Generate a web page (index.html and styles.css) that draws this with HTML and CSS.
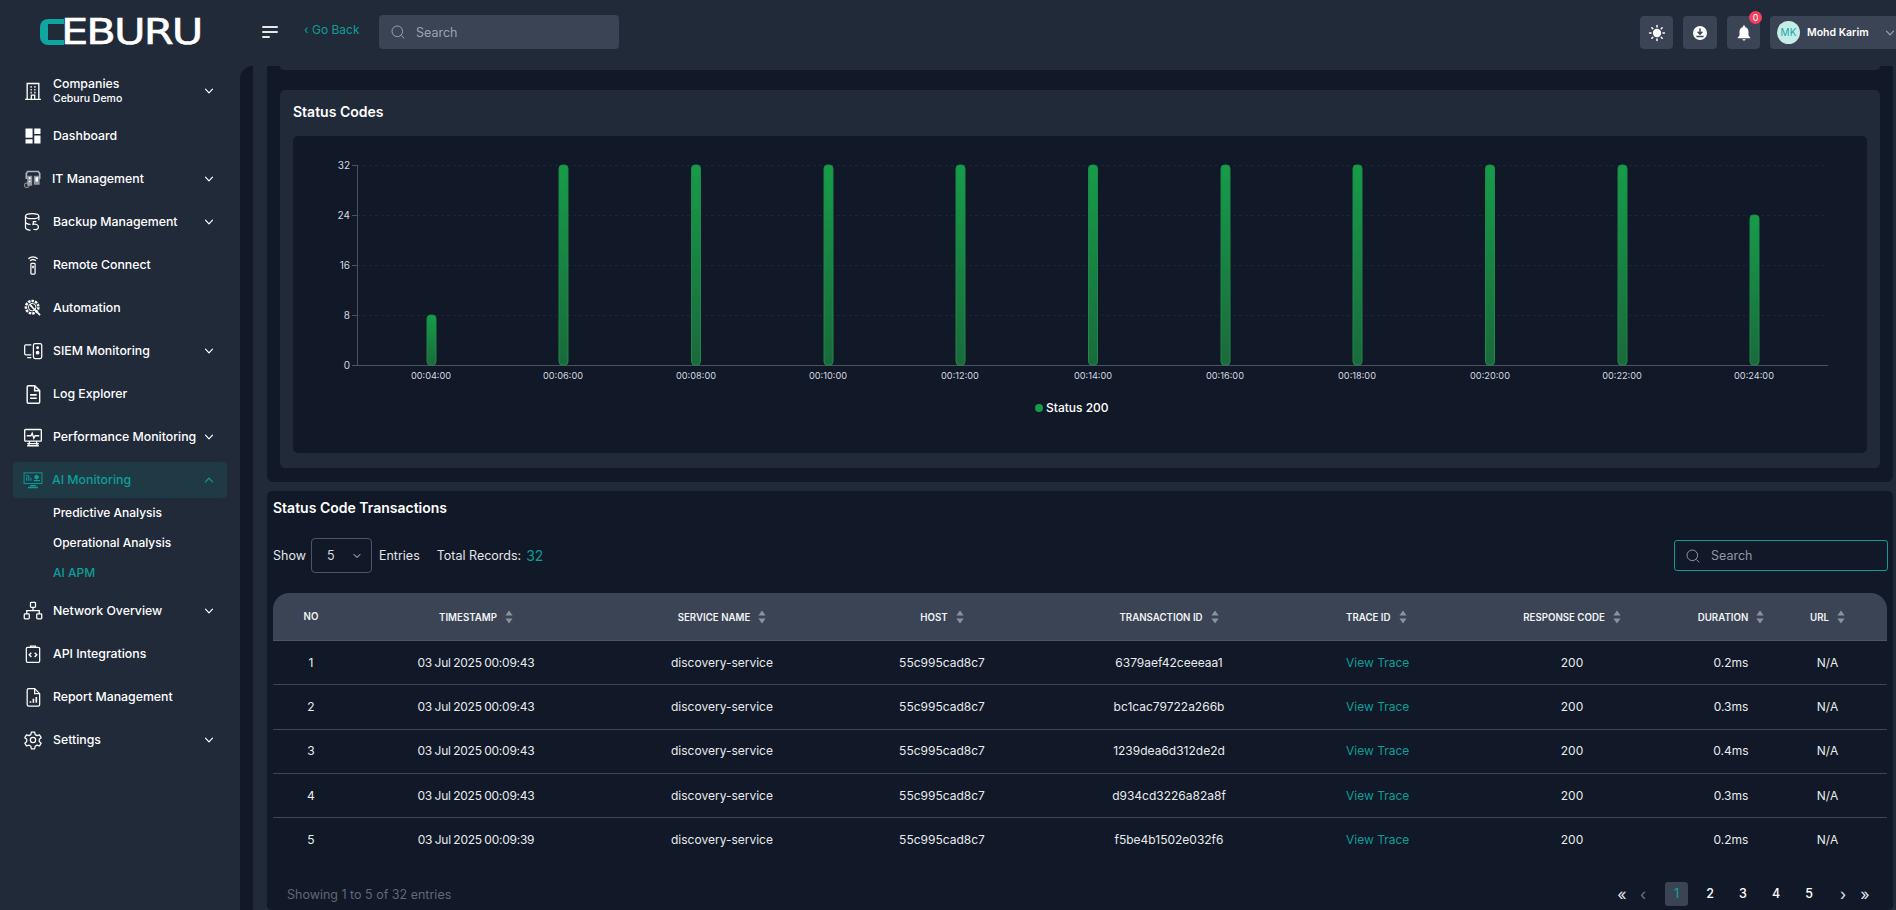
FILE: index.html
```html
<!DOCTYPE html>
<html lang="en">
<head>
<meta charset="utf-8">
<title>Ceburu</title>
<link rel="stylesheet" href="styles.css">
</head>
<body>
<svg class="defs" width="0" height="0" aria-hidden="true">
  <defs>
    <linearGradient id="barfill" x1="0" y1="0" x2="0" y2="1">
      <stop offset="0" stop-color="#169c49"/>
      <stop offset="1" stop-color="#1a6a3b"/>
    </linearGradient>
    <symbol id="chev" viewBox="0 0 12 12"><path d="M2.5 4.2 6 7.8l3.5-3.6" fill="none" stroke="currentColor" stroke-width="1.2" stroke-linecap="round" stroke-linejoin="round"/></symbol>
    <symbol id="mag" viewBox="0 0 16 16"><circle cx="7.3" cy="7.3" r="5.3" fill="none" stroke="currentColor" stroke-width="1"/><path d="m11.2 11.4 3 3" stroke="currentColor" stroke-width="1" fill="none"/></symbol>
    <symbol id="sort" viewBox="0 0 8 14"><path d="M4 0.5 7.6 5.6H.4zM4 13.5.4 8.4h7.2z" fill="currentColor"/></symbol>
  </defs>
</svg>
<div class="app">
  <header class="topbar">
    <div class="logo" aria-label="CEBURU"><span class="logo-c"></span><span class="logo-text">EBURU</span></div>
    <div class="hamburger"><i class="hl"></i><i class="hl"></i><i class="hl short"></i></div>
    <a class="goback">‹ Go Back</a>
    <div class="topsearch">
      <svg class="ico16"><use href="#mag"/></svg>
      <span>Search</span>
    </div>
    <div class="topright">
      <div class="tbtn"><svg class="ico18" viewBox="0 0 18 18"><circle cx="9" cy="9" r="4.2" fill="#fff"/><g stroke="#fff" stroke-width="1.5" stroke-linecap="round"><path d="M9 1.6v1.4M9 15v1.4M1.6 9H3M15 9h1.4M3.8 3.8l1 1M13.2 13.2l1 1M3.8 14.2l1-1M13.2 4.8l1-1"/></g></svg></div>
      <div class="tbtn wider"><svg class="ico18" viewBox="0 0 18 18"><circle cx="9" cy="9" r="7" fill="#fff"/><path d="M9 4.6v5.2M6.6 7.8 9 10.2l2.4-2.4M5.4 12.6h7.2" stroke="#3a4454" stroke-width="1.5" fill="none"/></svg></div>
      <div class="tbtn bell"><svg class="ico18" viewBox="0 0 18 18"><path d="M9 1.5c-.7 0-1.100.4-1.100 1v.5C5.600 3.600 4.500 5.500 4.500 8v3.400L2.800 13.600v.6h12.400v-.6l-1.700-2.200V8c0-2.500-1.100-4.400-3.400-5v-.5c0-.6-.4-1-1.100-1zM7.300 15.200c.2.800.9 1.300 1.700 1.300s1.500-.5 1.700-1.300z" fill="#fff"/></svg><span class="badge">0</span></div>
      <div class="user"><span class="avatar">MK</span><span class="uname">Mohd Karim</span><svg class="ico12 dim"><use href="#chev"/></svg></div>
    </div>
  </header>
  <div class="body">
    <nav class="sidebar">
      <div class="nav-item companies">
        <svg class="nico" viewBox="0 0 24 24" fill="none" stroke="#fff" stroke-width="1.6"><path d="M5 22V3h14v19M2.500 22h19M10 22v-5h4v5"/><path d="M9 7h1.500M13.500 7H15M9 10.500h1.500M13.500 10.500H15M9 14h1.500M13.500 14H15" stroke-width="2"/></svg>
        <div class="twoline"><span>Companies</span><small>Ceburu Demo</small></div>
        <svg class="ico12"><use href="#chev"/></svg>
      </div>
      <div class="nav-item">
        <svg class="nico" viewBox="0 0 24 24" fill="#fff"><path d="M3 3h8.500v11H3zM13.500 3H21v6.500h-7.500zM13.500 11.500H21V21h-7.500zM3 16h8.500v5H3z"/></svg>
        <span class="label">Dashboard</span>
      </div>
      <div class="nav-item tight">
        <svg class="nico" viewBox="0 0 24 24" fill="#aeb3bb"><path d="M5 2h14l2 3v7h-2V6l-1-2H6L5 6v6H3V5z"/><path d="M5 8h6v12H5zM13 8h7v11h-7z" opacity=".8"/><path d="M7 10h2v2H7zM7 14h2v2H7zM15 10h3v5h-3z" fill="#fff"/><rect x="2" y="17" width="5" height="5" rx="1" fill="none" stroke="#aeb3bb"/></svg>
        <span class="label">IT Management</span>
        <svg class="ico12"><use href="#chev"/></svg>
      </div>
      <div class="nav-item">
        <svg class="nico" viewBox="0 0 24 24" fill="none" stroke="#fff" stroke-width="1.500"><ellipse cx="11" cy="5" rx="8" ry="3"/><path d="M3 5v14c0 1.500 2.500 2.500 6 3M19 5v5M3 12c0 1.500 2.500 2.500 6 3"/><path d="M16 11.500h-3.500l-.5 3.500c3-1 6.500 0 6.500 3s-3.500 4-6 2.500"/></svg>
        <span class="label">Backup Management</span>
        <svg class="ico12"><use href="#chev"/></svg>
      </div>
      <div class="nav-item">
        <svg class="nico" viewBox="0 0 24 24" fill="none" stroke="#fff" stroke-width="1.500"><path d="M6.500 4.500c3-3 8-3 11 0M8.500 7c2-1.800 5-1.800 7 0"/><rect x="9.500" y="10" width="5" height="13" rx="1"/><path d="M12 13v3" stroke-width="2"/></svg>
        <span class="label">Remote Connect</span>
      </div>
      <div class="nav-item">
        <svg class="nico" viewBox="0 0 24 24" fill="none" stroke="#fff" stroke-width="1.600"><circle cx="11" cy="11" r="7.500" stroke-dasharray="3 1.200" stroke-width="3"/><circle cx="11" cy="11" r="4.500" stroke-width="1.200"/><path d="m9 9 11.500 11.500M8 7.500l3 3" stroke-width="2"/></svg>
        <span class="label">Automation</span>
      </div>
      <div class="nav-item">
        <svg class="nico" viewBox="0 0 24 24" fill="none" stroke="#fff" stroke-width="1.500"><path d="M10 4.500H3.500A1.500 1.500 0 0 0 2 6v9a1.500 1.500 0 0 0 1.500 1.500H10M5 20h5"/><rect x="12.500" y="3" width="10" height="18" rx="2"/><circle cx="17.500" cy="8" r="1" fill="#fff"/><circle cx="17.500" cy="14" r="1.500" fill="#fff"/></svg>
        <span class="label">SIEM Monitoring</span>
        <svg class="ico12"><use href="#chev"/></svg>
      </div>
      <div class="nav-item">
        <svg class="nico" viewBox="0 0 24 24" fill="none" stroke="#fff" stroke-width="1.700"><path d="M5 3.500A1.500 1.500 0 0 1 6.500 2H14l6 6v13.500a1.500 1.500 0 0 1-1.500 1.500h-12A1.500 1.500 0 0 1 5 21.500z"/><path d="M14 2v6h6M8.500 13h8M8.500 17h8" stroke-width="1.900"/></svg>
        <span class="label">Log Explorer</span>
      </div>
      <div class="nav-item">
        <svg class="nico" viewBox="0 0 24 24" fill="none" stroke="#fff" stroke-width="1.600"><rect x="2" y="3" width="20" height="14" rx="1"/><path d="M4.500 10.500h5l1.500-3 2 6 1.500-3h5M7 22l1-5M17 22l-1-5M5 20h14M5 22.500h14"/></svg>
        <span class="label">Performance Monitoring</span>
        <svg class="ico12"><use href="#chev"/></svg>
      </div>
      <div class="nav-item active tight">
        <svg class="nico" viewBox="0 0 28 24" fill="none" stroke="#0d9e97" stroke-width="1.300"><rect x="1.500" y="2" width="25" height="15"/><path d="M5 13V8M8 13V6M11 13V9M4 6h4" stroke-width="1.500"/><circle cx="19" cy="8" r="2.600" fill="#0d9e97"/><path d="M15 13h9M10 20h8M7 22.500h14" stroke-width="1.800"/></svg>
        <span class="label">AI Monitoring</span>
        <svg class="ico12"><use class="flip" href="#chev"/></svg>
      </div>
      <ul class="subnav">
        <li>Predictive Analysis</li>
        <li>Operational Analysis</li>
        <li class="cur">AI APM</li>
      </ul>
      <div class="nav-item">
        <svg class="nico" viewBox="0 0 24 24" fill="none" stroke="#fff" stroke-width="1.500"><rect x="9" y="1.500" width="6" height="6" rx="1"/><rect x="1.500" y="15.500" width="6" height="6" rx="1"/><rect x="16.500" y="15.500" width="6" height="6" rx="1"/><path d="M12 7.500v4M4.500 15.500v-4h15v4"/></svg>
        <span class="label">Network Overview</span>
        <svg class="ico12"><use href="#chev"/></svg>
      </div>
      <div class="nav-item">
        <svg class="nico" viewBox="0 0 24 24" fill="none" stroke="#fff" stroke-width="1.500"><rect x="4" y="4" width="16" height="18" rx="1.500"/><path d="M9 4V2.500h6V4" /><path d="m10 10.500-2.500 2.500 2.500 2.500M14 10.500l2.500 2.500-2.500 2.500" stroke-width="1.700"/></svg>
        <span class="label">API Integrations</span>
      </div>
      <div class="nav-item">
        <svg class="nico" viewBox="0 0 24 24" fill="none" stroke="#fff" stroke-width="1.500"><path d="M5 4a2 2 0 0 1 2-2h7l6 6v13a2 2 0 0 1-2 2H7a2 2 0 0 1-2-2z"/><path d="M14 2v6h6"/><path d="M9 19v-2M12.500 19v-5M16 19v-7" stroke-width="2"/></svg>
        <span class="label">Report Management</span>
      </div>
      <div class="nav-item">
        <svg class="nico" viewBox="0 0 24 24" fill="none" stroke="#fff" stroke-width="1.500" stroke-linejoin="round"><circle cx="12" cy="12" r="3.200"/><path d="M10 2.500h4l.6 3 2.300 1.300 2.900-1 2 3.400-2.300 2 0 2.600 2.300 2-2 3.400-2.900-1-2.300 1.300-.6 3h-4l-.6-3-2.300-1.300-2.900 1-2-3.400 2.300-2 0-2.600-2.300-2 2-3.400 2.900 1L9.400 5.500z"/></svg>
        <span class="label">Settings</span>
        <svg class="ico12"><use href="#chev"/></svg>
      </div>
    </nav>
    <main class="main">
      <div class="wrap">
        <section class="upper">
          <div class="panel-stub"></div>
          <div class="chart-card">
            <h2 class="card-title">Status Codes</h2>
            <div class="chart-box">
              <svg class="chart" viewBox="0 0 1574 317" width="1574" height="317">
                <g class="grid">
                  <line x1="64" x2="1535" y1="29.500" y2="29.500"/><line x1="64" x2="1535" y1="79.500" y2="79.500"/><line x1="64" x2="1535" y1="129.500" y2="129.500"/><line x1="64" x2="1535" y1="179.500" y2="179.500"/>
                </g>
                <g class="axis">
                  <line x1="64.500" x2="64.500" y1="29" y2="229"/><line x1="59" x2="1535" y1="229.500" y2="229.500"/>
                  <line x1="59" x2="64" y1="29.500" y2="29.500"/><line x1="59" x2="64" y1="79.500" y2="79.500"/><line x1="59" x2="64" y1="129.500" y2="129.500"/><line x1="59" x2="64" y1="179.500" y2="179.500"/>
                </g>
                <g class="bars">
                  <rect x="134" y="179" width="9" height="50" rx="3.500"/>
                  <rect x="266" y="29" width="9" height="200" rx="3.500"/>
                  <rect x="398.500" y="29" width="9" height="200" rx="3.500"/>
                  <rect x="531" y="29" width="9" height="200" rx="3.500"/>
                  <rect x="663" y="29" width="9" height="200" rx="3.500"/>
                  <rect x="795.500" y="29" width="9" height="200" rx="3.500"/>
                  <rect x="928" y="29" width="9" height="200" rx="3.500"/>
                  <rect x="1060" y="29" width="9" height="200" rx="3.500"/>
                  <rect x="1192.500" y="29" width="9" height="200" rx="3.500"/>
                  <rect x="1325" y="29" width="9" height="200" rx="3.500"/>
                  <rect x="1457" y="79" width="9" height="150" rx="3.500"/>
                </g>
                <g class="ylab">
                  <text x="57" y="33">32</text><text x="57" y="83">24</text><text x="57" y="133">16</text><text x="57" y="183">8</text><text x="57" y="233">0</text>
                </g>
                <g class="xlab">
                  <text x="138" y="243">00:04:00</text><text x="270" y="243">00:06:00</text><text x="403" y="243">00:08:00</text><text x="535" y="243">00:10:00</text><text x="667" y="243">00:12:00</text><text x="800" y="243">00:14:00</text><text x="932" y="243">00:16:00</text><text x="1064" y="243">00:18:00</text><text x="1197" y="243">00:20:00</text><text x="1329" y="243">00:22:00</text><text x="1461" y="243">00:24:00</text>
                </g>
                <circle class="ldot" cx="746" cy="272" r="4"/>
                <text class="ltext" x="753" y="276">Status 200</text>
              </svg>
            </div>
          </div>
        </section>
        <section class="lower">
          <h2 class="lower-title">Status Code Transactions</h2>
          <div class="controls">
            <span>Show</span>
            <div class="select"><span>5</span><svg class="ico10"><use href="#chev"/></svg></div>
            <span>Entries</span>
            <span class="total">Total Records:</span>
            <span class="count">32</span>
            <div class="tsearch"><svg class="ico16"><use href="#mag"/></svg><span>Search</span></div>
          </div>
          <table class="tbl">
            <colgroup>
              <col class="c1"><col class="c2"><col class="c3"><col class="c4"><col class="c5"><col class="c6"><col class="c7"><col class="c8"><col class="c9">
            </colgroup>
            <thead>
              <tr>
                <th>NO</th>
                <th>TIMESTAMP<svg class="sort"><use href="#sort"/></svg></th>
                <th>SERVICE NAME<svg class="sort"><use href="#sort"/></svg></th>
                <th>HOST<svg class="sort"><use href="#sort"/></svg></th>
                <th>TRANSACTION ID<svg class="sort"><use href="#sort"/></svg></th>
                <th class="left">TRACE ID<svg class="sort"><use href="#sort"/></svg></th>
                <th>RESPONSE CODE<svg class="sort"><use href="#sort"/></svg></th>
                <th>DURATION<svg class="sort"><use href="#sort"/></svg></th>
                <th>URL<svg class="sort"><use href="#sort"/></svg></th>
              </tr>
            </thead>
            <tbody>
              <tr><td>1</td><td class="ts">03 Jul 2025 00:09:43</td><td>discovery-service</td><td>55c995cad8c7</td><td>6379aef42ceeeaa1</td><td class="left link">View Trace</td><td>200</td><td>0.2ms</td><td>N/A</td></tr>
              <tr><td>2</td><td class="ts">03 Jul 2025 00:09:43</td><td>discovery-service</td><td>55c995cad8c7</td><td>bc1cac79722a266b</td><td class="left link">View Trace</td><td>200</td><td>0.3ms</td><td>N/A</td></tr>
              <tr><td>3</td><td class="ts">03 Jul 2025 00:09:43</td><td>discovery-service</td><td>55c995cad8c7</td><td>1239dea6d312de2d</td><td class="left link">View Trace</td><td>200</td><td>0.4ms</td><td>N/A</td></tr>
              <tr><td>4</td><td class="ts">03 Jul 2025 00:09:43</td><td>discovery-service</td><td>55c995cad8c7</td><td>d934cd3226a82a8f</td><td class="left link">View Trace</td><td>200</td><td>0.3ms</td><td>N/A</td></tr>
              <tr><td>5</td><td class="ts">03 Jul 2025 00:09:39</td><td>discovery-service</td><td>55c995cad8c7</td><td>f5be4b1502e032f6</td><td class="left link">View Trace</td><td>200</td><td>0.2ms</td><td>N/A</td></tr>
            </tbody>
          </table>
          <div class="tfoot">
            <span class="showing">Showing 1 to 5 of 32 entries</span>
            <div class="pager">
              <span class="pg arrow">«</span><span class="pg arrow off">‹</span><span class="pg on">1</span><span class="pg">2</span><span class="pg">3</span><span class="pg">4</span><span class="pg">5</span><span class="pg arrow next">›</span><span class="pg arrow">»</span>
            </div>
          </div>
        </section>
      </div>
    </main>
  </div>
</div>
</body>
</html>
```
FILE: styles.css
```css
* { box-sizing: border-box; }
html, body { margin: 0; height: 100%; }
body {
  background: #212a39;
  color: #fff;
  font-family: Inter, "Liberation Sans", sans-serif;
  font-size: 12px;
  overflow: hidden;
}
.defs { display: block; height: 0; }
.app { width: 1896px; height: 910px; display: flex; flex-direction: column; overflow: hidden; }

/* top bar */
.topbar { height: 66px; flex: none; display: flex; align-items: flex-start; background: #212a39; }
.logo { display: flex; align-items: center; width: 262px; height: 26px; margin-top: 19px; padding-left: 40px; flex: none; }
.logo-c { width: 24px; height: 26px; border: 5px solid #0fa5a0; border-left-width: 8px; border-right-width: 0; border-radius: 8px 0 0 8px; flex: none; }
.logo-text { font-family: "DejaVu Sans", sans-serif; font-size: 33px; line-height: 26px; letter-spacing: -1.5px; color: #fff; -webkit-text-stroke: .5px #fff; margin-left: -3px; transform-origin: left center; transform: scale(1.31, 1.08); }
.hamburger { width: 16px; margin-top: 26px; display: flex; flex-direction: column; gap: 3.300px; flex: none; }
.hl { display: block; height: 1.700px; background: #e5e7eb; border-radius: 1px; }
.hl.short { width: 50%; }
.goback { margin: 22px 0 0 26px; width: 75px; color: #0d9e97; font-size: 12px; line-height: 16px; flex: none; }
.topsearch { width: 240px; height: 34px; margin-top: 15px; background: #3a4454; border-radius: 4px; display: flex; align-items: center; gap: 10px; padding-left: 11px; color: #9aa3b2; flex: none; font-size: 12.500px; }
.ico16 { width: 16px; height: 16px; flex: none; }
.ico18 { width: 18px; height: 18px; }
.ico12 { width: 12px; height: 12px; flex: none; }
.ico10 { width: 10px; height: 10px; flex: none; }
.dim { color: #9aa3b2; margin-left: 3px; }
.topright { margin-left: auto; margin-top: 16px; display: flex; gap: 10px; }
.tbtn { position: relative; width: 33px; height: 33px; background: #3a4454; border-radius: 4px; display: flex; align-items: center; justify-content: center; }
.tbtn.wider { width: 34px; }
.badge { position: absolute; top: -5px; right: -2px; width: 13px; height: 13px; border-radius: 50%; background: #f43f5e; font-size: 9px; line-height: 13px; text-align: center; color: #fff; }
.user { width: 126px; height: 33px; background: #3a4454; border-radius: 4px 0 0 4px; display: flex; align-items: center; padding-left: 7px; }
.avatar { width: 23px; height: 23px; border-radius: 50%; background: #c6ece9; color: #1aa6a0; font-size: 10px; line-height: 23px; text-align: center; flex: none; }
.uname { font-size: 10.500px; font-weight: 600; margin: 0 0 0 7px; width: 74px; white-space: nowrap; flex: none; }

/* layout */
.body { flex: 1; display: flex; min-height: 0; }
.sidebar { width: 240px; flex: none; background: #212a39; font-weight: 500; font-size: 12.300px; display: flex; flex-direction: column; }
.main { flex: 1; background: #111827; border-top-left-radius: 13px; padding-left: 13px; min-width: 0; overflow: hidden; }

/* nav */
.nav-item { height: 36px; flex: none; margin: 3.500px 13px; padding-left: 10px; padding-right: 12px; display: flex; align-items: center; border-radius: 4px; white-space: nowrap; }
.nav-item.companies { height: 47px; margin-top: 1px; margin-bottom: 0; }
.nav-item.tight .label { margin-left: 9px; }
.nico { width: 20px; height: 20px; flex: none; }
.label { margin-left: 10px; flex: 1; }
.twoline { margin-left: 10px; flex: 1; display: flex; flex-direction: column; line-height: 15px; }
.twoline small { font-size: 10.500px; }
.nav-item.active { background: #1f3a45; color: #0d9e97; }
.flip { transform: rotate(180deg); transform-origin: center; }
.subnav { list-style: none; margin: -3.500px 0 1.500px; padding: 0 0 0 53px; flex: none; font-size: 12px; }
.subnav li { height: 30px; line-height: 30px; }
.subnav .cur { color: #0d9e97; }

/* main */
.wrap { height: 100%; background: #212a39; padding: 0 3px 0 14px; }
.upper { height: 416px; background: #111827; border-radius: 0 0 6px 6px; padding: 0 13px; }
.panel-stub { height: 4px; background: #212a39; border-radius: 0 0 5px 5px; }
.chart-card { height: 378px; margin-top: 20px; background: #212a39; border-radius: 5px; padding: 0 13px; }
.card-title { margin: 0; height: 46px; line-height: 44px; font-size: 14px; font-weight: 600; }
.chart-box { height: 317px; background: #111827; border-radius: 5px; }
.chart { display: block; }
.grid line { stroke: #1c2533; stroke-width: 1; stroke-dasharray: 3 3; }
.axis line { stroke: #4b5260; stroke-width: 1; }
.bars rect { fill: url(#barfill); stroke: #1d8a49; stroke-width: 1; }
.ylab text { fill: #d6dae0; font-size: 10px; text-anchor: end; }
.xlab text { fill: #d6dae0; font-size: 9.200px; text-anchor: middle; }
.ldot { fill: #169c49; }
.ltext { fill: #fff; font-size: 12px; font-weight: 500; }

.lower { height: 419px; margin-top: 9px; background: #111827; border-radius: 5px; padding: 0 5px 0 6px; }
.lower-title { margin: 0; height: 32px; line-height: 33px; font-size: 14px; font-weight: 600; }
.controls { height: 70px; padding-bottom: 5px; display: flex; align-items: center; font-size: 12.500px; color: #e2e5ea; }
.select { width: 61px; height: 35px; margin: 0 7px 0 5px; padding: 0 9px 0 15px; border: 1px solid #4b5563; border-radius: 4px; display: flex; align-items: center; justify-content: space-between; color: #d5d9df; }
.total { margin-left: 17px; }
.count { margin-left: 5px; color: #0d9e97; font-size: 14px; }
.tsearch { margin-left: auto; width: 214px; height: 31px; border: 1px solid #0f9a94; border-radius: 3px; display: flex; align-items: center; gap: 10px; padding-left: 10px; color: #8e98a8; }
.tbl { width: 1614px; table-layout: fixed; border-collapse: separate; border-spacing: 0; }
.c1 { width: 76px; } .c2 { width: 254px; } .c3 { width: 238px; } .c4 { width: 202px; } .c5 { width: 252px; }
.c6 { width: 155px; } .c7 { width: 244px; } .c8 { width: 74px; } .c9 { width: 119px; }
.tbl th { height: 48px; background: #3a4454; font-size: 9.700px; font-weight: 600; text-align: center; border-bottom: 1px solid #4b5563; white-space: nowrap; padding: 0; color: #f1f3f5; }
.tbl th:first-child { border-top-left-radius: 16px; }
.tbl th:last-child { border-top-right-radius: 16px; }
.sort { width: 8px; height: 14px; margin-left: 8px; color: #8a92a0; vertical-align: -3px; }
.tbl td { height: 44.300px; text-align: center; font-size: 12px; border-bottom: 1px solid #3d4656; padding: 0 0 1px; color: #e8ebee; white-space: nowrap; }
.tbl td.ts { letter-spacing: -.25px; word-spacing: -.6px; }
.tbl tbody tr:last-child td { border-bottom: 0; }
.tbl .left { text-align: left; padding-left: 51px; }
.tbl .link { color: #0d9e97; }
.tfoot { height: 50px; display: flex; align-items: center; justify-content: space-between; padding-left: 14px; padding-top: 14px; }
.showing { color: #5e6878; font-size: 12.500px; }
.pager { display: flex; align-items: center; margin-right: 12px; }
.pg { width: 33px; height: 24px; line-height: 24px; text-align: center; font-size: 12.500px; font-weight: 500; }
.pg.arrow { width: 22px; font-size: 16px; font-weight: 400; color: #e2e5ea; }
.pg.arrow.off { width: 20px; color: #6b7482; }
.pg.arrow.next { margin-left: 6.500px; }
.pg.on { width: 23px; margin: 0 5.500px 0 12px; background: #3a4454; border-radius: 3px; color: #0d9e97; }
```
